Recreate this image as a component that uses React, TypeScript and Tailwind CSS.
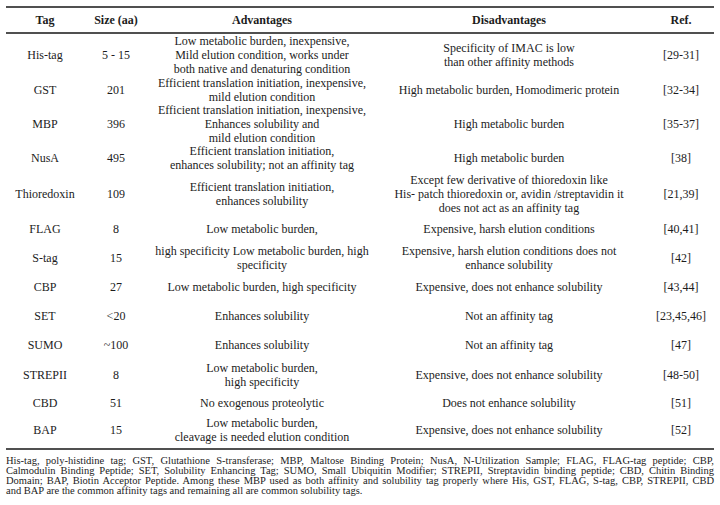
type Row = {
  tag: string;
  size: string;
  adv: string[];
  dis: string[];
  ref: string;
  h: string;
};

const rows: Row[] = [
  {
    tag: 'His-tag',
    size: '5 - 15',
    adv: ['Low metabolic burden, inexpensive,', 'Mild elution condition, works under', 'both native and denaturing condition'],
    dis: ['Specificity of IMAC is low', 'than other affinity methods'],
    ref: '[29-31]',
    h: 'h-[42px]',
  },
  {
    tag: 'GST',
    size: '201',
    adv: ['Efficient translation initiation, inexpensive,', 'mild elution condition'],
    dis: ['High metabolic burden, Homodimeric protein'],
    ref: '[32-34]',
    h: 'h-[27px]',
  },
  {
    tag: 'MBP',
    size: '396',
    adv: ['Efficient translation initiation, inexpensive,', 'Enhances solubility and', 'mild elution condition'],
    dis: ['High metabolic burden'],
    ref: '[35-37]',
    h: 'h-[40px]',
  },
  {
    tag: 'NusA',
    size: '495',
    adv: ['Efficient translation initiation,', 'enhances solubility; not an affinity tag'],
    dis: ['High metabolic burden'],
    ref: '[38]',
    h: 'h-[30px]',
  },
  {
    tag: 'Thioredoxin',
    size: '109',
    adv: ['Efficient translation initiation,', 'enhances solubility'],
    dis: ['Except few derivative of thioredoxin like', 'His- patch thioredoxin or, avidin /streptavidin it', 'does not act as an affinity tag'],
    ref: '[21,39]',
    h: 'h-[41px]',
  },
  {
    tag: 'FLAG',
    size: '8',
    adv: ['Low metabolic burden,'],
    dis: ['Expensive, harsh elution conditions'],
    ref: '[40,41]',
    h: 'h-[30px]',
  },
  {
    tag: 'S-tag',
    size: '15',
    adv: ['high specificity Low metabolic burden, high', 'specificity'],
    dis: ['Expensive, harsh elution conditions does not', 'enhance solubility'],
    ref: '[42]',
    h: 'h-[28px]',
  },
  {
    tag: 'CBP',
    size: '27',
    adv: ['Low metabolic burden, high specificity'],
    dis: ['Expensive, does not enhance solubility'],
    ref: '[43,44]',
    h: 'h-[30px]',
  },
  {
    tag: 'SET',
    size: '<20',
    adv: ['Enhances solubility'],
    dis: ['Not an affinity tag'],
    ref: '[23,45,46]',
    h: 'h-[28px]',
  },
  {
    tag: 'SUMO',
    size: '~100',
    adv: ['Enhances solubility'],
    dis: ['Not an affinity tag'],
    ref: '[47]',
    h: 'h-[30px]',
  },
  {
    tag: 'STREPII',
    size: '8',
    adv: ['Low metabolic burden,', 'high specificity'],
    dis: ['Expensive, does not enhance solubility'],
    ref: '[48-50]',
    h: 'h-[29px]',
  },
  {
    tag: 'CBD',
    size: '51',
    adv: ['No exogenous proteolytic'],
    dis: ['Does not enhance solubility'],
    ref: '[51]',
    h: 'h-[27px]',
  },
  {
    tag: 'BAP',
    size: '15',
    adv: ['Low metabolic burden,', 'cleavage is needed elution condition'],
    dis: ['Expensive, does not enhance solubility'],
    ref: '[52]',
    h: 'h-[27px]',
  },
];

const cols = 'grid grid-cols-[78px_64px_228px_272px_66px]';

function Lines({ items }: { items: string[] }) {
  return (
    <div className="flex flex-col items-center leading-[14px] whitespace-nowrap">
      {items.map((t, i) => (
        <span key={i}>{t}</span>
      ))}
    </div>
  );
}

export default function App() {
  return (
    <div className="w-[720px] h-[505px] bg-white text-[#1c1c1c] font-['Liberation_Serif',serif] pt-[6px] px-[6px]">
      <div className="w-[708px]">
        {/* header */}
        <div className={`${cols} h-[28px] border-y-2 border-[#505050] text-[12px] font-bold`}>
          <div className="flex items-center justify-center">Tag</div>
          <div className="flex items-center justify-center">Size (aa)</div>
          <div className="flex items-center justify-center">Advantages</div>
          <div className="flex items-center justify-center pr-[6px]">Disadvantages</div>
          <div className="flex items-center justify-center">Ref.</div>
        </div>

        {rows.map((r) => (
          <div key={r.tag} className={`${cols} ${r.h} text-[12px]`}>
            <div className="flex items-center justify-center">{r.tag}</div>
            <div className="flex items-center justify-center">{r.size}</div>
            <div className="flex items-center justify-center">
              <Lines items={r.adv} />
            </div>
            <div className="flex items-center justify-center pr-[6px]">
              <Lines items={r.dis} />
            </div>
            <div className="flex items-center justify-center">{r.ref}</div>
          </div>
        ))}

        <div className="border-t-2 border-[#505050] mt-[5px] pt-[6px] text-[10.5px] leading-[10px]">
          <div className="[text-align-last:justify] whitespace-nowrap">
            His-tag, poly-histidine tag; GST, Glutathione S-transferase; MBP, Maltose Binding Protein; NusA, N-Utilization Sample; FLAG, FLAG-tag peptide; CBP,
          </div>
          <div className="[text-align-last:justify] whitespace-nowrap">
            Calmodulin Binding Peptide; SET, Solubility Enhancing Tag; SUMO, Small Ubiquitin Modifier; STREPII, Streptavidin binding peptide; CBD, Chitin Binding
          </div>
          <div className="[text-align-last:justify] whitespace-nowrap">
            Domain; BAP, Biotin Acceptor Peptide. Among these MBP used as both affinity and solubility tag properly where His, GST, FLAG, S-tag, CBP, STREPII, CBD
          </div>
          <div>and BAP are the common affinity tags and remaining all are common solubility tags.</div>
        </div>
      </div>
    </div>
  );
}
